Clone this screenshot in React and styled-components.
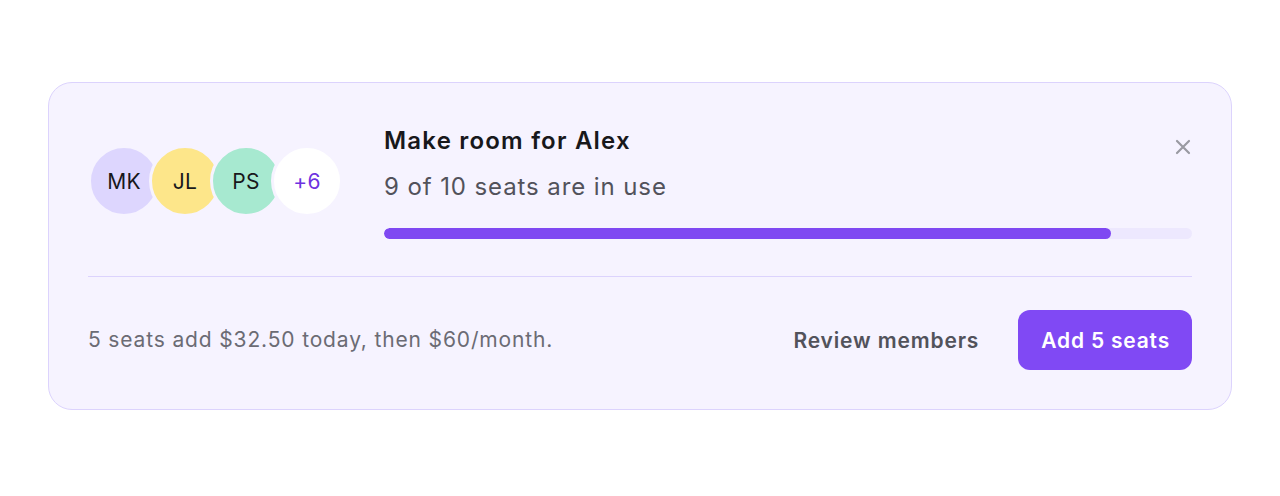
import React from "react";
import styled, { createGlobalStyle } from "styled-components";

const GlobalStyle = createGlobalStyle`
  html, body {
    margin: 0;
    padding: 0;
    background: #ffffff;
    font-family: Inter, "Noto Sans", "Liberation Sans", sans-serif;
  }
`;

const Page = styled.div`
  width: 1280px;
  height: 496px;
  box-sizing: border-box;
  padding: 82px 48px 0;
`;

const Card = styled.section`
  box-sizing: border-box;
  width: 1184px;
  height: 328px;
  background: #f6f3ff;
  border: 1px solid #dcd3fd;
  border-radius: 24px;
  padding: 40px 39px 39px 39px;
  display: flex;
  flex-direction: column;
`;

const Top = styled.div`
  display: flex;
  align-items: center;
  gap: 41px;
  padding-bottom: 37px;
  border-bottom: 1px solid #dcd3fd;
`;

const Avatars = styled.div`
  display: flex;
  align-items: center;
  flex-shrink: 0;
`;

const Avatar = styled.div`
  box-sizing: border-box;
  width: 72px;
  height: 72px;
  border-radius: 50%;
  border: 3px solid #f6f3ff;
  background: ${(p) => p.$bg};
  color: ${(p) => p.$fg || "#18181b"};
  display: flex;
  align-items: center;
  justify-content: center;
  font-size: 21px;
  font-weight: 400;
  letter-spacing: 0.3px;
  margin-left: ${(p) => (p.$first ? "0" : "-11px")};
`;

const Info = styled.div`
  flex: 1;
  display: flex;
  flex-direction: column;
`;

const TitleRow = styled.div`
  display: flex;
  justify-content: space-between;
  align-items: flex-start;
`;

const Title = styled.h2`
  margin: 0;
  font-size: 24px;
  line-height: 36px;
  font-weight: 600;
  letter-spacing: 1.2px;
  color: #18181b;
`;

const Close = styled.button`
  border: none;
  background: none;
  padding: 0;
  margin-top: 16px;
  margin-right: 1px;
  width: 16px;
  height: 16px;
  display: flex;
  cursor: pointer;
  color: #9a9aa2;
`;

const Subtitle = styled.p`
  margin: 10px 0 0;
  font-size: 24px;
  line-height: 36px;
  letter-spacing: 0.9px;
  color: #52525b;
`;

const Track = styled.div`
  margin-top: 23px;
  height: 11px;
  border-radius: 6px;
  background: #ede8fe;
  overflow: hidden;
`;

const Fill = styled.div`
  height: 100%;
  border-radius: 6px;
  background: #7f48f2;
`;

const Footer = styled.div`
  flex: 1;
  display: flex;
  align-items: flex-end;
  justify-content: space-between;
`;

const Note = styled.p`
  margin: 0 0 16px;
  font-size: 21px;
  line-height: 28px;
  letter-spacing: 0.85px;
  color: #6b6b74;
`;

const Actions = styled.div`
  display: flex;
  align-items: center;
  gap: 39px;
`;

const GhostButton = styled.button`
  border: none;
  background: none;
  padding: 0;
  font-family: inherit;
  font-size: 21px;
  font-weight: 600;
  letter-spacing: 0.85px;
  color: #52525b;
  cursor: pointer;
`;

const PrimaryButton = styled.button`
  border: none;
  height: 60px;
  padding: 0 22px 0 23px;
  border-radius: 12px;
  background: #8049f4;
  color: #ffffff;
  font-family: inherit;
  font-size: 21px;
  font-weight: 600;
  letter-spacing: 0.8px;
  cursor: pointer;
`;

const members = [
  { initials: "MK", bg: "#ddd6fe" },
  { initials: "JL", bg: "#fde68a" },
  { initials: "PS", bg: "#a7e9d0" },
  { initials: "+6", bg: "#ffffff", fg: "#6d32e0" },
];

export default function App() {
  const used = 9;
  const total = 10;
  return (
    <>
      <GlobalStyle />
      <Page>
        <Card>
          <Top>
            <Avatars>
              {members.map((m, i) => (
                <Avatar key={m.initials} $bg={m.bg} $fg={m.fg} $first={i === 0}>
                  {m.initials}
                </Avatar>
              ))}
            </Avatars>
            <Info>
              <TitleRow>
                <Title>Make room for Alex</Title>
                <Close aria-label="Close">
                  <svg width="16" height="16" viewBox="0 0 16 16" fill="none">
                    <path d="M2 2L14 14M14 2L2 14" stroke="currentColor" strokeWidth="2.2" strokeLinecap="round" />
                  </svg>
                </Close>
              </TitleRow>
              <Subtitle>{used} of {total} seats are in use</Subtitle>
              <Track>
                <Fill style={{ width: `${(used / total) * 100}%` }} />
              </Track>
            </Info>
          </Top>
          <Footer>
            <Note>5 seats add $32.50 today, then $60/month.</Note>
            <Actions>
              <GhostButton>Review members</GhostButton>
              <PrimaryButton>Add 5 seats</PrimaryButton>
            </Actions>
          </Footer>
        </Card>
      </Page>
    </>
  );
}
